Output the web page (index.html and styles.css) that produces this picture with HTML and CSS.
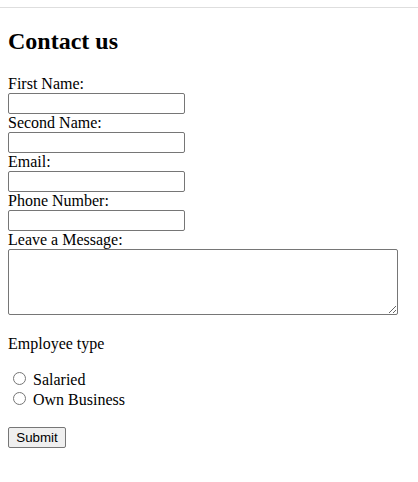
FILE: index.html
```html
<!DOCTYPE html>
<html>
<head>
<meta charset="utf-8">
<title>Contact us</title>
<link rel="stylesheet" href="styles.css">
</head>
<body>
<div class="topbar"></div>
<div class="page">
  <h2 class="title">Contact us</h2>
  <form class="form">
    <label for="fn">First Name:</label><br>
    <input class="field" type="text" id="fn"><br>
    <label for="sn">Second Name:</label><br>
    <input class="field" type="text" id="sn"><br>
    <label for="em">Email:</label><br>
    <input class="field" type="email" id="em"><br>
    <label for="ph">Phone Number:</label><br>
    <input class="field" type="tel" id="ph"><br>
    <label for="msg">Leave a Message:</label><br>
    <textarea class="message" id="msg"></textarea>
    <p class="para">Employee type</p>
    <div class="radios">
      <input class="radio" type="radio" name="etype" id="sal"> <label for="sal">Salaried</label><br>
      <input class="radio" type="radio" name="etype" id="own"> <label for="own">Own Business</label>
    </div>
    <div class="actions"><button class="submit" type="submit">Submit</button></div>
  </form>
</div>
</body>
</html>
```

FILE: styles.css
```css
html, body {
  margin: 0;
  padding: 0;
  background: #ffffff;
}
body {
  font-family: "Liberation Serif", "Times New Roman", serif;
  font-size: 16px;
  color: #000;
}
.topbar {
  height: 7px;
  border-bottom: 1px solid #dedede;
}
.page {
  padding: 0 8px;
}
.title {
  font-size: 24px;
  font-weight: bold;
  margin: 19.92px 0;
}
.field {
  width: 177px;
  height: 21px;
  box-sizing: border-box;
  border: 1px solid #767676;
  border-radius: 2px;
  padding: 1px 2px;
  margin: 0;
  font-family: "Liberation Sans", Arial, sans-serif;
  font-size: 13.33px;
}
.message {
  width: 390px;
  height: 66px;
  box-sizing: border-box;
  border: 1px solid #767676;
  border-radius: 2px;
  padding: 2px;
  margin: 0;
  font-family: "Liberation Mono", monospace;
  font-size: 13.33px;
}
.para {
  margin: 16px 0;
}
.radios {
  margin: 16px 0;
}
.radio {
  margin: 3px 3px 0 5px;
  width: 13px;
  height: 13px;
}
.actions {
  margin-top: 18px;
}
.submit {
  display: block;
  box-sizing: border-box;
  width: 58px;
  height: 21px;
  font-family: "Liberation Sans", Arial, sans-serif;
  font-size: 13.33px;
  padding: 1px 6px;
  border: 1px solid #767676;
  border-radius: 2px;
  background: #efefef;
  color: #000;
}
```
